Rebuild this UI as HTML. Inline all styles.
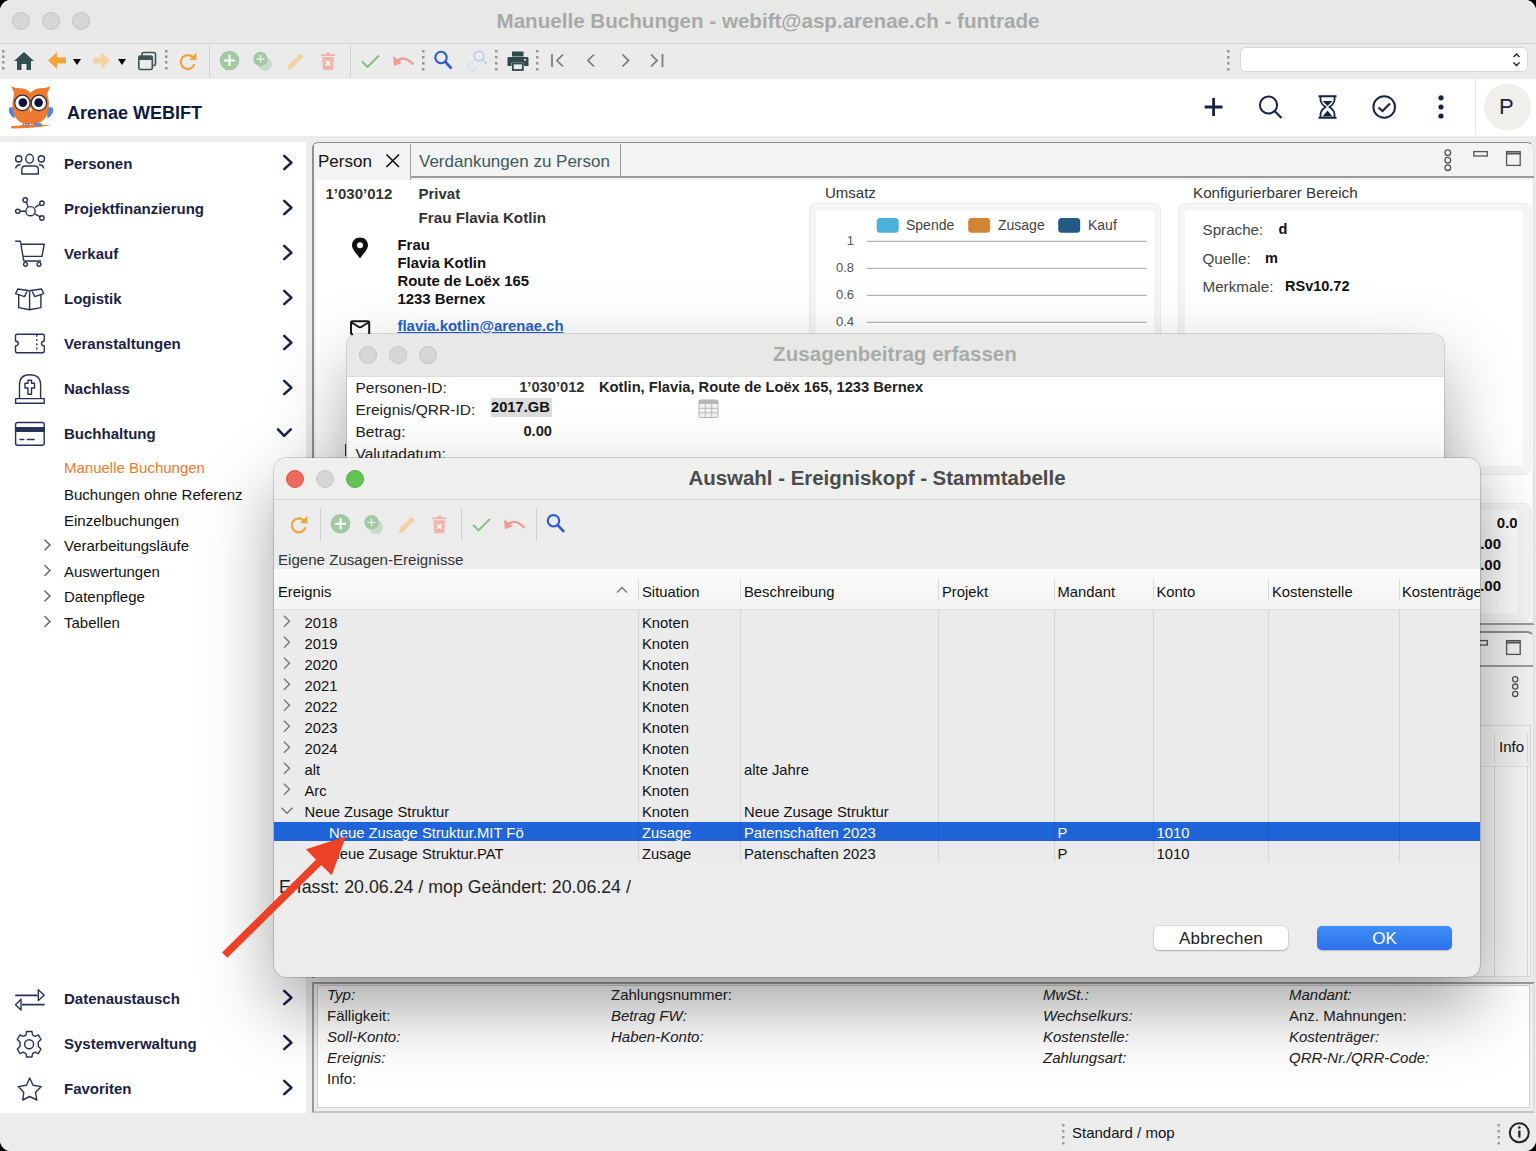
<!DOCTYPE html>
<html><head><meta charset="utf-8">
<style>
*{margin:0;padding:0;box-sizing:border-box}
html,body{width:1536px;height:1151px;overflow:hidden;background:#000}
body{font-family:"Liberation Sans",sans-serif;position:relative}
.a{position:absolute}
.t{position:absolute;white-space:nowrap;line-height:1}
#win{position:absolute;left:0;top:0;width:1536px;height:1151px;background:#ececec;border-radius:11px;overflow:hidden}
#titlebar{left:0;top:0;width:1536px;height:44px;background:#e8e9e7;border-bottom:1px solid #d2d3d1}
.tl{position:absolute;width:18px;height:18px;border-radius:50%;background:#d4d7d5;border:1px solid #c2c5c3}
#toolbar{left:0;top:44px;width:1536px;height:35px;background:#ebebeb}
#header{left:0;top:79px;width:1536px;height:57px;background:#fff}
#sidebar{left:0;top:142px;width:306px;height:971px;background:#fff}
.nav{font-size:15px;font-weight:bold;color:#1a2246}
.sub{font-size:15px;color:#111}
.chev{position:absolute}
.hdr{position:absolute;top:127px;font-size:14.8px;color:#111;white-space:nowrap;line-height:1}
.row{position:absolute;left:0;width:1206px;height:21px;font-size:14.8px;color:#111;line-height:1}
.row span{position:absolute;top:5.2px;white-space:nowrap}
.row .c0{left:30.5px}.row .c1{left:368px}.row .c2{left:470px}.row .c4{left:783.5px}.row .c5{left:882.5px}
.row.sel{color:#fff}
</style></head>
<body>
<div id="win">
  <div id="titlebar" class="a">
    <div class="tl" style="left:12px;top:12px"></div>
    <div class="tl" style="left:42px;top:12px"></div>
    <div class="tl" style="left:72px;top:12px"></div>
    <div class="t" style="left:0;width:1536px;text-align:center;top:10.8px;font-size:20.6px;font-weight:bold;color:#a7aaa8">Manuelle Buchungen - webift@asp.arenae.ch - funtrade</div>
  </div>
  <div id="toolbar" class="a">
    <svg class="a" style="left:0;top:0" width="1536" height="35" viewBox="0 44 1536 35">
      <!-- grip dots -->
      <g fill="#9a9585"><rect x="2" y="50" width="2.5" height="2.5"/><rect x="2" y="55.5" width="2.5" height="2.5"/><rect x="2" y="61" width="2.5" height="2.5"/><rect x="2" y="67" width="2.5" height="2.5"/></g>
      <g fill="#9a9585"><rect x="165" y="50" width="2.5" height="2.5"/><rect x="165" y="55.5" width="2.5" height="2.5"/><rect x="165" y="61" width="2.5" height="2.5"/><rect x="165" y="67" width="2.5" height="2.5"/></g>
      <g fill="#9a9585"><rect x="422" y="50" width="2.5" height="2.5"/><rect x="422" y="56" width="2.5" height="2.5"/><rect x="422" y="62" width="2.5" height="2.5"/><rect x="422" y="68" width="2.5" height="2.5"/></g>
      <g fill="#9a9585"><rect x="495" y="50" width="2.5" height="2.5"/><rect x="495" y="56" width="2.5" height="2.5"/><rect x="495" y="62" width="2.5" height="2.5"/><rect x="495" y="68" width="2.5" height="2.5"/></g>
      <g fill="#9a9585"><rect x="536" y="50" width="2.5" height="2.5"/><rect x="536" y="56" width="2.5" height="2.5"/><rect x="536" y="62" width="2.5" height="2.5"/><rect x="536" y="68" width="2.5" height="2.5"/></g>
      <g fill="#9a9585"><rect x="1227" y="50" width="2.5" height="2.5"/><rect x="1227" y="56" width="2.5" height="2.5"/><rect x="1227" y="62" width="2.5" height="2.5"/><rect x="1227" y="68" width="2.5" height="2.5"/></g>
      <!-- separators -->
      <rect x="209" y="46" width="1" height="31" fill="#d0d0d0"/>
      <rect x="350" y="46" width="1" height="31" fill="#d0d0d0"/>
      <!-- home -->
      <path d="M24 52 L34 61 L31 61 L31 70 L26.5 70 L26.5 64 L21.5 64 L21.5 70 L17 70 L17 61 L14 61 Z" fill="#2f4f50"/>
      <!-- back -->
      <path d="M48 60.5 L57 52 L57 57.5 L66 57.5 L66 63.5 L57 63.5 L57 69 Z" fill="#f0a53a"/>
      <path d="M73 59 L81 59 L77 65 Z" fill="#000"/>
      <!-- forward -->
      <path d="M110 60.5 L101 52 L101 57.5 L93 57.5 L93 63.5 L101 63.5 L101 69 Z" fill="#f3d3a3"/>
      <path d="M118 59 L126 59 L122 65 Z" fill="#000"/>
      <!-- windows -->
      <rect x="142" y="52.5" width="13.5" height="13" rx="1.5" fill="none" stroke="#3d5557" stroke-width="1.6"/>
      <rect x="138.8" y="56" width="13.5" height="13.5" rx="1.5" fill="#ebebeb" stroke="#3d5557" stroke-width="1.6"/>
      <rect x="138.8" y="56" width="13.5" height="4" fill="#3d5557"/>
      <!-- refresh -->
      <path d="M193.5 58 A7 7 0 1 0 194.5 64" fill="none" stroke="#f0a53a" stroke-width="2.2"/>
      <path d="M196.5 52.5 L196.5 60 L189 60 Z" fill="#f0a53a"/>
      <!-- plus circle -->
      <circle cx="229.5" cy="60.5" r="9.8" fill="#a3c9a2"/>
      <path d="M229.5 55 V66 M224 60.5 H235" stroke="#fff" stroke-width="2"/>
      <!-- plus 2 -->
      <circle cx="265" cy="64" r="7" fill="#c7dcc6"/>
      <circle cx="260.5" cy="59" r="7.2" fill="#a3c9a2"/>
      <path d="M260.5 55 V63 M256.5 59 H264.5" stroke="#e7f0e6" stroke-width="1.3"/>
      <!-- pencil -->
      <path d="M287 70 L288.5 65 L300 53.5 L303.5 57 L292 68.5 Z" fill="#f3d3a3"/>
      <!-- trash -->
      <path d="M321 54 H335 V56 H321 Z M326 52.5 H330 V54 H326 Z" fill="#f2b5ae"/>
      <path d="M322 57 H334 L333 70 H323 Z" fill="#f2b5ae"/>
      <path d="M325.8 61 L330.2 65.5 M330.2 61 L325.8 65.5" stroke="#fff" stroke-width="1.4"/>
      <!-- check -->
      <path d="M362 61.5 L367.5 67 L379 55.5" fill="none" stroke="#80bb80" stroke-width="1.9"/>
      <!-- undo -->
      <path d="M396.5 62 Q403 54 413.5 64.5" fill="none" stroke="#ef9b93" stroke-width="2.4"/>
      <path d="M393 56 L394 66 L402 63 Z" fill="#ef9b93"/>
      <!-- search -->
      <circle cx="441" cy="57.5" r="5.7" fill="none" stroke="#2c5ad6" stroke-width="2.1"/>
      <path d="M445 61.5 L451.5 68.5" stroke="#2c5ad6" stroke-width="2.6"/>
      <!-- search 2 -->
      <circle cx="479" cy="56" r="4.8" fill="none" stroke="#b7cdee" stroke-width="1.5"/>
      <path d="M482.5 59.5 L487 64.5" stroke="#b7cdee" stroke-width="1.6"/>
      <path d="M476 67 A4 4 0 1 1 473 63" fill="none" stroke="#cfe0f1" stroke-width="1.3"/>
      <!-- printer -->
      <rect x="512" y="51.5" width="11.5" height="5" fill="#2e4a4c"/>
      <path d="M508 57 H527.5 Q528.5 57 528.5 58.5 V66 H524 V62.5 H511.5 V66 H507.5 V58.5 Q507.5 57 508 57 Z" fill="#2e4a4c"/>
      <rect x="512.8" y="63.5" width="10" height="6.5" fill="none" stroke="#2e4a4c" stroke-width="1.8"/>
      <rect x="524" y="59" width="2" height="1.5" fill="#fff"/>
      <!-- nav -->
      <g fill="none" stroke="#777" stroke-width="1.7">
        <path d="M552 54 V67 M563 54.5 L557 60.5 L563 66.5"/>
        <path d="M594 54.5 L588 60.5 L594 66.5"/>
        <path d="M622.5 54.5 L628.5 60.5 L622.5 66.5"/>
        <path d="M651 54.5 L657 60.5 L651 66.5 M662.5 54 V67"/>
      </g>
      <!-- select box -->
      <rect x="1240.5" y="47.5" width="287" height="24" rx="5" fill="#fff" stroke="#d8d8d8"/>
      <path d="M1513.5 57 L1516.5 54 L1519.5 57 M1513.5 62.5 L1516.5 65.5 L1519.5 62.5" fill="none" stroke="#222" stroke-width="1.4"/>
    </svg>
  </div>
  <div id="header" class="a">
    <svg class="a" style="left:0;top:0" width="1536" height="56" viewBox="0 79 1536 56">
      <!-- owl -->
      <path d="M9.3 107.5 Q7 113.5 14.5 118.5 L15.5 107 Z" fill="#4a86e8"/>
      <path d="M52.8 107.5 Q55 113.5 47.5 118.5 L46.5 107 Z" fill="#4a86e8"/>
      <path d="M11 86.3 Q15 88.2 20 88.3 Q27 88.5 30.5 93 Q34 88.5 41 88.3 Q46 88.2 50.5 86.3 Q48.5 90 47.2 93.5 Q49.5 101 48.8 108 Q48 117 41 122 Q36 124.5 30.5 124.5 Q25 124.5 20 122 Q13 117 12.5 108 Q12 101 14.2 93.5 Q13 90 11 86.3 Z" fill="#ee7a30"/>
      <path d="M11 126.2 Q30 124.3 51 125 Q36 128.3 11.5 128.5 Z" fill="#ee7a30"/>
      <g fill="#4a86e8"><rect x="22.5" y="123.3" width="1.6" height="2.2"/><rect x="25" y="123.3" width="1.6" height="2.2"/><rect x="27.5" y="123.3" width="1.6" height="2.2"/><rect x="33.3" y="123.3" width="8.5" height="2.2" rx="1"/></g>
      <circle cx="22.4" cy="102.9" r="8.3" fill="#2a2a3a"/>
      <circle cx="38.9" cy="102.9" r="8.3" fill="#2a2a3a"/>
      <circle cx="22.4" cy="102.9" r="7.1" fill="#fdfbf5"/>
      <circle cx="38.9" cy="102.9" r="7.1" fill="#fdfbf5"/>
      <circle cx="22.9" cy="102.6" r="4.3" fill="#0b1640"/>
      <circle cx="38.6" cy="102.6" r="4.3" fill="#0b1640"/>
      <path d="M29.2 108.5 L32.2 108.5 L30.7 112.5 Z" fill="#fdfbf5"/>
      <!-- right icons -->
      <path d="M1213.6 98 V116 M1204.6 107 H1222.6" stroke="#1a2246" stroke-width="2.8"/>
      <circle cx="1268.5" cy="105" r="8.6" fill="none" stroke="#1a2246" stroke-width="2"/>
      <path d="M1274.8 111.3 L1281.5 118" stroke="#1a2246" stroke-width="2.2"/>
      <path d="M1318.5 96.3 H1336.5 M1318.5 117.8 H1336.5" stroke="#1a2246" stroke-width="2"/>
      <path d="M1320.5 96.5 V100 Q1321 104 1325.5 107 Q1321 110 1320.5 114 V117.5 M1334.5 96.5 V100 Q1334 104 1329.5 107 Q1334 110 1334.5 114 V117.5" fill="none" stroke="#1a2246" stroke-width="1.8"/>
      <path d="M1322.5 101 H1332.5 L1327.5 106 Z M1322.5 116.5 L1327.5 110.5 L1332.5 116.5 Z" fill="#1a2246"/>
      <circle cx="1384.2" cy="107" r="10.8" fill="none" stroke="#1a2246" stroke-width="2"/>
      <path d="M1378.5 107.5 L1382.5 111 L1390 103.5" fill="none" stroke="#1a2246" stroke-width="2.2"/>
      <circle cx="1441" cy="97.8" r="2.6" fill="#1a2246"/>
      <circle cx="1441" cy="107" r="2.6" fill="#1a2246"/>
      <circle cx="1441" cy="116" r="2.6" fill="#1a2246"/>
      <rect x="1475" y="79" width="1" height="56" fill="#e6e6e6"/>
      <circle cx="1507.6" cy="107" r="23.6" fill="#f0efec"/>
    </svg>
    <div class="t" style="left:67px;top:25px;font-size:18px;font-weight:bold;color:#0f1a3e">Arenae WEBIFT</div>
    <div class="t" style="left:1499px;top:17px;font-size:22px;color:#1a2246">P</div>
  </div>
  <div id="sidebar" class="a">
    <svg class="a" style="left:0;top:0" width="306" height="971" viewBox="0 142 306 971">
      <g fill="none" stroke="#1a2246" stroke-width="2.5" stroke-linecap="round" stroke-linejoin="round"><path d="M284.2 155.79999999999998 L291.4 162.7 L284.2 169.1"/><path d="M284.2 200.79999999999998 L291.4 207.7 L284.2 214.1"/><path d="M284.2 245.79999999999998 L291.4 252.7 L284.2 259.09999999999997"/><path d="M284.2 290.8 L291.4 297.7 L284.2 304.09999999999997"/><path d="M284.2 335.8 L291.4 342.7 L284.2 349.09999999999997"/><path d="M284.2 380.8 L291.4 387.7 L284.2 394.09999999999997"/><path d="M284.2 990.8000000000001 L291.4 997.7 L284.2 1004.1"/><path d="M284.2 1035.8 L291.4 1042.7 L284.2 1049.1000000000001"/><path d="M284.2 1080.8 L291.4 1087.7 L284.2 1094.1000000000001"/><path d="M278 429.3 L284.2 435.9 L290.8 429.3"/></g><g fill="none" stroke="#666" stroke-width="1.5"><path d="M44.5 539.7 L50 545.0 L44.5 550.3"/><path d="M44.5 565.2 L50 570.5 L44.5 575.8"/><path d="M44.5 590.7 L50 596.0 L44.5 601.3"/><path d="M44.5 616.2 L50 621.5 L44.5 626.8"/></g>
      <g fill="none" stroke="#283257" stroke-width="1.4" stroke-linejoin="round">
        <!-- personen (box 10,145) -->
        <g transform="translate(10 145)">
          <ellipse cx="19.6" cy="13.7" rx="3.8" ry="4.4"/>
          <circle cx="8.7" cy="13.9" r="3.1"/>
          <circle cx="31.4" cy="13.9" r="3.1"/>
          <path d="M11.8 29 V24.5 Q11.8 21 15.5 21 H24.5 Q28.3 21 28.3 24.5 V29 Z"/>
          <path d="M5.6 23.4 Q6.5 19.8 10.5 19.8 M33.8 23.4 Q32.9 19.8 29 19.8"/>
        </g>
        <!-- projekt (box 10,190) -->
        <g transform="translate(10 190)">
          <circle cx="20.5" cy="21.2" r="4.6"/>
          <circle cx="15.3" cy="10" r="2.2"/>
          <circle cx="31.9" cy="13.2" r="2.2"/>
          <circle cx="31.9" cy="28" r="2.2"/>
          <ellipse cx="7.8" cy="21.2" rx="2.2" ry="2"/>
          <path d="M16.5 12.2 L18 16.8 M29.8 14.3 L25 17.3 M29.9 26.7 L24.5 23.8 M10.2 21.2 L15.6 21.2"/>
        </g>
        <!-- cart (box 10,233) -->
        <g transform="translate(10 233)">
          <path d="M5.2 8.3 H10.4 L13.8 28 H31"/>
          <path d="M11.3 11.3 H34.2 L32 23.4 H13.2"/>
          <circle cx="15.5" cy="31.3" r="1.9"/>
          <circle cx="29" cy="31.3" r="1.9"/>
        </g>
        <!-- box (box 10,278) -->
        <g transform="translate(10 278)">
          <path d="M8.7 17 V29.6 L19.6 31.8 L30.9 29.6 V17"/>
          <path d="M19.6 13 V31.8"/>
          <path d="M19.6 12.8 L7.8 11 L5.6 15.6 L14.5 18.6 L17 13.5"/>
          <path d="M19.6 12.8 L31.5 11 L33.7 15.6 L24.8 18.6 L22.3 13.5"/>
        </g>
        <!-- ticket (box 10,323) -->
        <g transform="translate(10 323)">
          <path d="M7 11.3 H32.8 Q34.3 11.3 34.3 12.8 V18 Q31.5 18.5 31.5 20.5 Q31.5 22.5 34.3 23 V28.3 Q34.3 29.8 32.8 29.8 H7 Q5.5 29.8 5.5 28.3 V23 Q8.3 22.5 8.3 20.5 Q8.3 18.5 5.5 18 V12.8 Q5.5 11.3 7 11.3 Z"/>
          <path d="M26.8 12 V29" stroke-dasharray="1.8 2.4"/>
        </g>
        <!-- grave (box 10,368) -->
        <g transform="translate(10 368)">
          <path d="M9.5 30.2 V17 Q9.5 6.8 19.6 6.8 Q30.6 6.8 30.6 17 V30.2"/>
          <rect x="5.6" y="30.6" width="28.6" height="4.6"/>
          <path d="M18 26.2 V20 H15 V15.3 H18 V12.3 H21.5 V15.3 H24.5 V20 H21.5 V26.2 Z"/>
        </g>
        <!-- card (box 10,413) -->
        <g transform="translate(10 413)">
          <rect x="5.6" y="9.5" width="28.6" height="22.8" rx="2"/>
          <rect x="5.6" y="14.6" width="28.6" height="3.8" fill="#283257"/>
          <path d="M10 26.6 H13.8 M17.4 26.6 H24" stroke-width="1.5" stroke-linecap="round"/>
        </g>
        <!-- datenaustausch (box 10,978) -->
        <g transform="translate(10 978)">
          <path d="M5.2 17.3 H27.5 M12 26.7 H34.6" stroke-width="1.8"/>
          <path d="M28.3 11.8 L34.2 17.3 L28.3 22.5 Z"/>
          <path d="M11 21.2 L5.5 26.7 L11 32 Z"/>
        </g>
        <!-- gear (box 10,1023) -->
        <g transform="translate(10 1023)">
          <circle cx="19.1" cy="21.2" r="4.5"/>
          <path d="M16.5 8.5 H22 L22.5 12 L25 13.3 L28.3 11.8 L31 16.5 L28.3 19 V23.5 L31 26 L28.3 30.6 L25 29.2 L22.5 30.6 L22 34 H16.5 L16 30.6 L13.3 29.2 L10 30.6 L7.3 26 L10 23.5 V19 L7.3 16.5 L10 11.8 L13.3 13.3 L16 12 Z"/>
        </g>
        <!-- star (box 10,1068) -->
        <g transform="translate(10 1068)">
          <path d="M19.7 10 L23 17.3 L31.3 18.6 L25.5 24.5 L26.8 32 L19.7 28.5 L12.7 32 L13.8 24.5 L8.3 18.6 L16.5 17.3 Z"/>
        </g>
      </g>
    </svg>
    <div class="t nav" style="left:64px;top:14px">Personen</div>
    <div class="t nav" style="left:64px;top:59px">Projektfinanzierung</div>
    <div class="t nav" style="left:64px;top:104px">Verkauf</div>
    <div class="t nav" style="left:64px;top:149px">Logistik</div>
    <div class="t nav" style="left:64px;top:194px">Veranstaltungen</div>
    <div class="t nav" style="left:64px;top:239px">Nachlass</div>
    <div class="t nav" style="left:64px;top:284px">Buchhaltung</div>
    <div class="t sub" style="left:64px;top:318px;color:#ee7a30">Manuelle Buchungen</div>
    <div class="t sub" style="left:64px;top:345px">Buchungen ohne Referenz</div>
    <div class="t sub" style="left:64px;top:371px">Einzelbuchungen</div>
    <div class="t sub" style="left:64px;top:396px">Verarbeitungsläufe</div>
    <div class="t sub" style="left:64px;top:422px">Auswertungen</div>
    <div class="t sub" style="left:64px;top:447px">Datenpflege</div>
    <div class="t sub" style="left:64px;top:473px">Tabellen</div>
    <div class="t nav" style="left:64px;top:849px">Datenaustausch</div>
    <div class="t nav" style="left:64px;top:894px">Systemverwaltung</div>
    <div class="t nav" style="left:64px;top:939px">Favoriten</div>
  </div>

  <!-- main upper panel -->
  <div class="a" style="left:312px;top:142px;width:1223px;height:483px;border:2px solid #8f8f8f;border-top-width:1.5px;border-right-color:#e6e6e6;border-bottom-color:#9a9a9a;border-radius:6px 8px 0 0;background:#f3f3f3"></div>
  <div class="a" style="left:411px;top:176px;width:1123px;height:2px;background:#9b9b9b"></div>
  <div class="a" style="left:316px;top:180px;width:1216px;height:441px;background:#fff"></div>
  <!-- tabs -->
  <div class="a" style="left:314px;top:144px;width:97px;height:36px;background:#f3f3f3;border-right:1.5px solid #a5a5a5"></div>
  <div class="a" style="left:411px;top:144px;width:210px;height:32px;background:#f3f3f3;border-right:1.5px solid #999"></div>
  <div class="t" style="left:318px;top:152.8px;font-size:17px;color:#111">Person</div>
  <svg class="a" style="left:384px;top:152px" width="18" height="18" viewBox="0 0 18 18"><path d="M2.5 2.5 L15 15 M15 2.5 L2.5 15" stroke="#111" stroke-width="1.6"/></svg>
  <div class="t" style="left:419px;top:152.8px;font-size:17px;color:#3d5b5b">Verdankungen zu Person</div>
  <svg class="a" style="left:1436px;top:145px" width="95" height="30" viewBox="1436 145 95 30">
    <g fill="none" stroke="#555" stroke-width="1.3">
      <circle cx="1447.8" cy="152.7" r="2.8"/><circle cx="1447.8" cy="160.2" r="2.8"/><circle cx="1447.8" cy="167.7" r="2.8"/>
      <rect x="1473.8" y="151.6" width="13.5" height="4.4"/>
      <rect x="1506.6" y="151.6" width="13.6" height="13.8"/>
    </g>
    <rect x="1506" y="152.5" width="14.8" height="2" fill="#555"/>
  </svg>
  <!-- person details -->
  <div class="t" style="left:325.5px;top:186.3px;font-size:15px;font-weight:bold;color:#333">1’030’012</div>
  <div class="t" style="left:418.5px;top:186.3px;font-size:15px;font-weight:bold;color:#333">Privat</div>
  <div class="t" style="left:418.5px;top:210px;font-size:15.2px;font-weight:bold;color:#333">Frau Flavia Kotlin</div>
  <svg class="a" style="left:350px;top:236px" width="20" height="24" viewBox="0 0 20 24"><path d="M10 1.5 C5.3 1.5 2 5 2 9.2 C2 13.5 7 18 10 22.5 C13 18 18 13.5 18 9.2 C18 5 14.7 1.5 10 1.5 Z M10 6.3 A3 3 0 1 1 10 12.3 A3 3 0 1 1 10 6.3 Z" fill="#111" fill-rule="evenodd"/></svg>
  <div class="a" style="left:397.5px;top:235.5px;font-size:14.9px;font-weight:bold;color:#111;line-height:18px;white-space:nowrap">Frau<br>Flavia Kotlin<br>Route de Loëx 165<br>1233 Bernex</div>
  <svg class="a" style="left:348px;top:318px;z-index:5" width="25" height="18" viewBox="0 0 25 18"><path d="M3 16.5 V4.8 Q3 3.2 4.6 3.2 H19.6 Q21.2 3.2 21.2 4.8 V16" fill="none" stroke="#151515" stroke-width="2"/><path d="M3.3 16.3 H5" stroke="#151515" stroke-width="2"/><path d="M3.5 4.5 Q8 7 10 8.5 Q12 10 14 8.5 Q16 7 20.7 4.5" fill="none" stroke="#151515" stroke-width="1.9"/></svg>
  <div class="t" style="left:397.5px;top:318.5px;font-size:14.9px;font-weight:bold;color:#1f5fd0;text-decoration:underline">flavia.kotlin@arenae.ch</div>
  <!-- Umsatz -->
  <div class="t" style="left:825px;top:184.5px;font-size:15px;color:#333">Umsatz</div>
  <div class="a" style="left:808.5px;top:202.5px;width:352px;height:300px;background:#f5f5f5;border:1px solid #ebebeb;border-radius:7px"></div>
  <div class="a" style="left:816px;top:211px;width:338px;height:280px;background:#fff"></div>
  <svg class="a" style="left:816px;top:211px" width="338" height="130" viewBox="816 211 338 130">
    <rect x="876.7" y="218" width="22" height="14.7" rx="3.5" fill="#4bb0da"/>
    <rect x="968.2" y="218" width="22" height="14.7" rx="3.5" fill="#d18532"/>
    <rect x="1058.2" y="218" width="22" height="14.7" rx="3.5" fill="#225a83"/>
    <g stroke="#b5b5b5" stroke-width="1.2"><path d="M866.8 241.3 H1146.6 M866.8 268.3 H1146.6 M866.8 295.3 H1146.6 M866.8 322.3 H1146.6"/></g>
  </svg>
  <div class="t" style="left:906px;top:218px;font-size:14px;color:#444">Spende</div>
  <div class="t" style="left:998px;top:218px;font-size:14px;color:#444">Zusage</div>
  <div class="t" style="left:1088px;top:218px;font-size:14px;color:#444">Kauf</div>
  <div class="t" style="left:820px;width:34px;text-align:right;top:234px;font-size:13px;color:#555">1</div>
  <div class="t" style="left:820px;width:34px;text-align:right;top:261px;font-size:13px;color:#555">0.8</div>
  <div class="t" style="left:820px;width:34px;text-align:right;top:288px;font-size:13px;color:#555">0.6</div>
  <div class="t" style="left:820px;width:34px;text-align:right;top:315px;font-size:13px;color:#555">0.4</div>
  <!-- Konfigurierbarer -->
  <div class="t" style="left:1193px;top:184.5px;font-size:15.2px;color:#333">Konfigurierbarer Bereich</div>
  <div class="a" style="left:1178px;top:202.5px;width:353px;height:272px;background:#f5f5f5;border:1px solid #ebebeb;border-radius:7px"></div>
  <div class="a" style="left:1185px;top:211px;width:338px;height:255px;background:#fff"></div>
  <div class="t" style="left:1202.5px;top:222px;font-size:15.2px;color:#444">Sprache:</div>
  <div class="t" style="left:1278.5px;top:222px;font-size:14.5px;font-weight:bold;color:#111">d</div>
  <div class="t" style="left:1202.5px;top:250.5px;font-size:15.2px;color:#444">Quelle:</div>
  <div class="t" style="left:1265px;top:250.5px;font-size:14.5px;font-weight:bold;color:#111">m</div>
  <div class="t" style="left:1202.5px;top:279px;font-size:15.2px;color:#444">Merkmale:</div>
  <div class="t" style="left:1285px;top:279px;font-size:14.5px;font-weight:bold;color:#111">RSv10.72</div>
  <!-- totals box -->
  <div class="a" style="left:1178px;top:502.5px;width:353px;height:118px;background:#f5f5f5;border:1px solid #ebebeb;border-radius:7px"></div>
  <div class="a" style="left:1185px;top:510px;width:332px;height:103px;background:#fff;overflow:hidden">
    <div class="t" style="left:0;width:341px;text-align:right;top:5px;font-size:15px;font-weight:bold;color:#111">0.00</div>
    <div class="t" style="left:0;width:316px;text-align:right;top:26px;font-size:15px;font-weight:bold;color:#111">0.00</div>
    <div class="t" style="left:0;width:316px;text-align:right;top:47px;font-size:15px;font-weight:bold;color:#111">0.00</div>
    <div class="t" style="left:0;width:316px;text-align:right;top:68px;font-size:15px;font-weight:bold;color:#111">0.00</div>
  </div>
  <!-- second panel -->
  <div class="a" style="left:312px;top:631px;width:1223px;height:347px;border:2px solid #8f8f8f;border-right-color:#e6e6e6;border-bottom:none;border-radius:6px 8px 0 0;background:#f3f3f3"></div>
  <div class="a" style="left:314px;top:665px;width:1219px;height:2px;background:#9b9b9b"></div>
  <svg class="a" style="left:1436px;top:633px" width="95" height="70" viewBox="1436 633 95 70">
    <g fill="none" stroke="#555" stroke-width="1.3">
      <rect x="1473.8" y="640.6" width="13.5" height="4.4"/>
      <rect x="1506.6" y="640.6" width="13.6" height="13.8"/>
      <circle cx="1515.2" cy="679.3" r="2.6"/><circle cx="1515.2" cy="686.6" r="2.6"/><circle cx="1515.2" cy="693.9" r="2.6"/>
    </g>
    <rect x="1506" y="641.5" width="14.8" height="2" fill="#555"/>
  </svg>
  <div class="a" style="left:1200px;top:724.5px;width:331px;height:252px;background:#f4f4f4;border:1px solid #dadada"></div>
  <div class="a" style="left:1201px;top:766px;width:329px;height:210px;background:#f7f7f7;border-top:1px solid #e2e2e2"></div>
  <div class="a" style="left:1494px;top:734px;width:1px;height:29px;background:#dcdcdc"></div>
  <div class="a" style="left:1527px;top:734px;width:1px;height:29px;background:#dcdcdc"></div>
  <div class="a" style="left:1494px;top:767px;width:1px;height:209px;background:#dadada"></div>
  <div class="a" style="left:1527px;top:767px;width:1px;height:209px;background:#dadada"></div>
  <div class="t" style="left:1499px;top:739px;font-size:15px;color:#111">Info</div>
  <!-- bottom detail panel -->
  <div class="a" style="left:312px;top:982px;width:1223px;height:131px;border:2px solid #9b9b9b;border-right-color:#e0e0e0;border-bottom-color:#c4c4c4;background:#eee"></div>
  <div class="a" style="left:317px;top:985px;width:1213px;height:123px;background:#fff;border:1px solid #d0d0d0"></div>
  <div class="a" style="left:327px;top:983.8px;font-size:15px;color:#222;line-height:21px;white-space:nowrap"><i>Typ:</i><br>Fälligkeit:<br><i>Soll-Konto:</i><br><i>Ereignis:</i><br>Info:</div>
  <div class="a" style="left:611px;top:983.8px;font-size:15px;color:#222;line-height:21px;white-space:nowrap">Zahlungsnummer:<br><i>Betrag FW:</i><br><i>Haben-Konto:</i></div>
  <div class="a" style="left:1043px;top:983.8px;font-size:15px;color:#222;line-height:21px;white-space:nowrap"><i>MwSt.:</i><br><i>Wechselkurs:</i><br><i>Kostenstelle:</i><br><i>Zahlungsart:</i></div>
  <div class="a" style="left:1289px;top:983.8px;font-size:15px;color:#222;line-height:21px;white-space:nowrap"><i>Mandant:</i><br>Anz. Mahnungen:<br><i>Kostenträger:</i><br><i>QRR-Nr./QRR-Code:</i></div>

  <div class="a" style="left:344.5px;top:444px;width:1.6px;height:12px;background:#333"></div>
  <!-- dialog 1 -->
  <div class="a" style="left:346.5px;top:334px;width:1097px;height:200px;border-radius:10px 10px 0 0;background:#fff;box-shadow:0 0 0 0.5px rgba(0,0,0,0.25),0 30px 70px rgba(0,0,0,0.34);overflow:hidden">
    <div class="a" style="left:0;top:0;width:1097px;height:42.5px;background:#e8e9e7;border-bottom:1px solid #dcdcdc"></div>
    <div class="tl" style="left:12px;top:11.5px"></div>
    <div class="tl" style="left:42px;top:11.5px"></div>
    <div class="tl" style="left:72px;top:11.5px"></div>
    <div class="t" style="left:0;width:1097px;text-align:center;top:9.8px;font-size:20.6px;font-weight:bold;color:#a9aba9">Zusagenbeitrag erfassen</div>
    <div class="t" style="left:9px;top:45.5px;font-size:15.5px;color:#222">Personen-ID:</div>
    <div class="t" style="left:9px;top:67.5px;font-size:15.5px;color:#222">Ereignis/QRR-ID:</div>
    <div class="t" style="left:9px;top:90px;font-size:15.5px;color:#222">Betrag:</div>
    <div class="t" style="left:9px;top:112px;font-size:15.5px;color:#222">Valutadatum:</div>
    <div class="t" style="left:100px;width:138px;text-align:right;top:45.5px;font-size:14.7px;font-weight:bold;color:#333">1’030’012</div>
    <div class="t" style="left:252.5px;top:45.5px;font-size:14.7px;font-weight:bold;color:#222">Kotlin, Flavia, Route de Loëx 165, 1233 Bernex</div>
    <div class="a" style="left:144px;top:64.3px;width:61px;height:19.2px;background:#dcdcdc"></div>
    <div class="t" style="left:144.5px;top:66px;font-size:14.7px;font-weight:bold;color:#111">2017.GB</div>
    <div class="t" style="left:100px;width:105.5px;text-align:right;top:90px;font-size:14.7px;font-weight:bold;color:#222">0.00</div>
    <svg class="a" style="left:351px;top:64.5px" width="22" height="20" viewBox="0 0 22 20">
      <rect x="1" y="1" width="19" height="17.5" rx="1.5" fill="#f2f2f2" stroke="#b0b0b0" stroke-width="1"/>
      <rect x="1" y="1" width="19" height="4" fill="#b8b8b8"/>
      <g stroke="#b8b8b8" stroke-width="1"><path d="M1 9.3 H20 M1 13.8 H20 M7.3 5 V18.5 M13.7 5 V18.5"/></g>
    </svg>
  </div>
  <!-- dialog 2 -->
  <div class="a" style="left:274px;top:457.7px;width:1205.5px;height:519px;border-radius:12px;background:#ececec;box-shadow:0 0 0 0.5px rgba(0,0,0,0.3),0 30px 70px rgba(0,0,0,0.36);overflow:hidden">
    <div class="a" style="left:0;top:0;width:1206px;height:42.5px;background:#eff0ee;border-bottom:1px solid #d6d6d6"></div>
    <div class="tl" style="left:12.4px;top:12.4px;background:#ee6a5f;border-color:#d8574d"></div>
    <div class="tl" style="left:42.3px;top:12.4px"></div>
    <div class="tl" style="left:72.4px;top:12.4px;background:#5fc454;border-color:#51ad47"></div>
    <div class="t" style="left:0;width:1206px;text-align:center;top:10.3px;font-size:20.45px;font-weight:bold;color:#4a4b4a">Auswahl - Ereigniskopf - Stammtabelle</div>

    <svg class="a" style="left:0;top:0" width="1206" height="519" viewBox="274 457.7 1206 519">
      <g transform="translate(111 463)">
      <path d="M193.5 58 A7 7 0 1 0 194.5 64" fill="none" stroke="#f0a53a" stroke-width="2.2"/>
      <path d="M196.5 52.5 L196.5 60 L189 60 Z" fill="#f0a53a"/>
      </g>
      <rect x="320" y="508" width="1" height="33" fill="#cfcfcf"/>
      <g transform="translate(111 463)">
      <circle cx="229.5" cy="60.5" r="9.8" fill="#a3c9a2"/>
      <path d="M229.5 55 V66 M224 60.5 H235" stroke="#fff" stroke-width="2"/>
      </g><g transform="translate(111 463)">
      <circle cx="265" cy="64" r="7" fill="#c7dcc6"/>
      <circle cx="260.5" cy="59" r="7.2" fill="#a3c9a2"/>
      <path d="M260.5 55 V63 M256.5 59 H264.5" stroke="#e7f0e6" stroke-width="1.3"/>
      </g><g transform="translate(111.4 463)">
      <path d="M287 70 L288.5 65 L300 53.5 L303.5 57 L292 68.5 Z" fill="#f3d3a3"/>
      </g><g transform="translate(111.4 463)">
      <path d="M321 54 H335 V56 H321 Z M326 52.5 H330 V54 H326 Z" fill="#f2b5ae"/>
      <path d="M322 57 H334 L333 70 H323 Z" fill="#f2b5ae"/>
      <path d="M325.8 61 L330.2 65.5 M330.2 61 L325.8 65.5" stroke="#fff" stroke-width="1.4"/>
      </g>
      <rect x="461" y="508" width="1" height="33" fill="#cfcfcf"/>
      <g transform="translate(111 463)">
      <path d="M362 61.5 L367.5 67 L379 55.5" fill="none" stroke="#80bb80" stroke-width="1.9"/>
      </g><g transform="translate(111 463)">
      <path d="M396.5 62 Q403 54 413.5 64.5" fill="none" stroke="#ef9b93" stroke-width="2.4"/>
      <path d="M393 56 L394 66 L402 63 Z" fill="#ef9b93"/>
      </g>
      <rect x="536" y="508" width="1" height="33" fill="#cfcfcf"/>
      <g transform="translate(112.5 463)">
      <circle cx="441" cy="57.5" r="5.7" fill="none" stroke="#2c5ad6" stroke-width="2.1"/>
      <path d="M445 61.5 L451.5 68.5" stroke="#2c5ad6" stroke-width="2.6"/>
      </g>
    </svg>
    <div class="t" style="left:4px;top:94px;font-size:15.1px;color:#333">Eigene Zusagen-Ereignisse</div>
    <!-- table header -->
    <div class="a" style="left:0;top:111.5px;width:1206px;height:40.5px;background:linear-gradient(#fbfbfb,#f4f4f4);border-bottom:1px solid #dedede"></div>
    <div class="a" style="left:0;top:152.5px;width:1206px;height:252px;background:#ebebeb"></div>
    <div class="a" style="left:364px;top:121px;width:1px;height:22px;background:#dadada"></div>
    <div class="a" style="left:466px;top:121px;width:1px;height:22px;background:#dadada"></div>
    <div class="a" style="left:664px;top:121px;width:1px;height:22px;background:#dadada"></div>
    <div class="a" style="left:779.5px;top:121px;width:1px;height:22px;background:#dadada"></div>
    <div class="a" style="left:878.5px;top:121px;width:1px;height:22px;background:#dadada"></div>
    <div class="a" style="left:994px;top:121px;width:1px;height:22px;background:#dadada"></div>
    <div class="a" style="left:1124.5px;top:121px;width:1px;height:22px;background:#dadada"></div>
    <div class="a" style="left:364px;top:152.5px;width:1px;height:252px;background:#d6d6d6"></div>
    <div class="a" style="left:466px;top:152.5px;width:1px;height:252px;background:#d6d6d6"></div>
    <div class="a" style="left:664px;top:152.5px;width:1px;height:252px;background:#d6d6d6"></div>
    <div class="a" style="left:779.5px;top:152.5px;width:1px;height:252px;background:#d6d6d6"></div>
    <div class="a" style="left:878.5px;top:152.5px;width:1px;height:252px;background:#d6d6d6"></div>
    <div class="a" style="left:994px;top:152.5px;width:1px;height:252px;background:#d6d6d6"></div>
    <div class="a" style="left:1124.5px;top:152.5px;width:1px;height:252px;background:#d6d6d6"></div>
    <div class="hdr" style="left:4px">Ereignis</div>
    <div class="hdr" style="left:368px">Situation</div>
    <div class="hdr" style="left:470px">Beschreibung</div>
    <div class="hdr" style="left:668px">Projekt</div>
    <div class="hdr" style="left:783.5px">Mandant</div>
    <div class="hdr" style="left:882.5px">Konto</div>
    <div class="hdr" style="left:998px">Kostenstelle</div>
    <div class="hdr" style="left:1128px">Kostenträger</div>
    <svg class="a" style="left:340px;top:127px" width="16" height="10" viewBox="0 0 16 10"><path d="M3 7.5 L8 2.5 L13 7.5" fill="none" stroke="#777" stroke-width="1.3"/></svg>
    <div class="a" style="left:0;top:364.1px;width:1206px;height:19px;background:#1f65d9"></div><div class="a" style="left:364px;top:364.1px;width:1px;height:19px;background:rgba(0,0,0,0.1)"></div><div class="a" style="left:466px;top:364.1px;width:1px;height:19px;background:rgba(0,0,0,0.1)"></div><div class="a" style="left:664px;top:364.1px;width:1px;height:19px;background:rgba(0,0,0,0.1)"></div><div class="a" style="left:779.5px;top:364.1px;width:1px;height:19px;background:rgba(0,0,0,0.1)"></div><div class="a" style="left:878.5px;top:364.1px;width:1px;height:19px;background:rgba(0,0,0,0.1)"></div><div class="a" style="left:994px;top:364.1px;width:1px;height:19px;background:rgba(0,0,0,0.1)"></div><div class="a" style="left:1124.5px;top:364.1px;width:1px;height:19px;background:rgba(0,0,0,0.1)"></div>
    <div class="row" style="top:153.3px"><span class="c0">2018</span><span class="c1">Knoten</span><span class="c2"></span></div>
<div class="row" style="top:174.3px"><span class="c0">2019</span><span class="c1">Knoten</span><span class="c2"></span></div>
<div class="row" style="top:195.3px"><span class="c0">2020</span><span class="c1">Knoten</span><span class="c2"></span></div>
<div class="row" style="top:216.3px"><span class="c0">2021</span><span class="c1">Knoten</span><span class="c2"></span></div>
<div class="row" style="top:237.3px"><span class="c0">2022</span><span class="c1">Knoten</span><span class="c2"></span></div>
<div class="row" style="top:258.3px"><span class="c0">2023</span><span class="c1">Knoten</span><span class="c2"></span></div>
<div class="row" style="top:279.3px"><span class="c0">2024</span><span class="c1">Knoten</span><span class="c2"></span></div>
<div class="row" style="top:300.3px"><span class="c0">alt</span><span class="c1">Knoten</span><span class="c2">alte Jahre</span></div>
<div class="row" style="top:321.3px"><span class="c0">Arc</span><span class="c1">Knoten</span><span class="c2"></span></div>
<div class="row" style="top:342.3px"><span class="c0">Neue Zusage Struktur</span><span class="c1">Knoten</span><span class="c2">Neue Zusage Struktur</span></div>
<div class="row sel" style="top:363.3px"><span class="c0" style="left:55px">Neue Zusage Struktur.MIT Fö</span><span class="c1">Zusage</span><span class="c2">Patenschaften 2023</span><span class="c4">P</span><span class="c5">1010</span></div>
<div class="row" style="top:384.3px"><span class="c0" style="left:55px">Neue Zusage Struktur.PAT</span><span class="c1">Zusage</span><span class="c2">Patenschaften 2023</span><span class="c4">P</span><span class="c5">1010</span></div>

    <svg class="a" style="left:0;top:0" width="40" height="420"><g fill="none" stroke="#777" stroke-width="1.4"><path d="M10 157.8 L15.5 163.3 L10 168.8"/><path d="M10 178.8 L15.5 184.3 L10 189.8"/><path d="M10 199.8 L15.5 205.3 L10 210.8"/><path d="M10 220.8 L15.5 226.3 L10 231.8"/><path d="M10 241.8 L15.5 247.3 L10 252.8"/><path d="M10 262.8 L15.5 268.3 L10 273.8"/><path d="M10 283.8 L15.5 289.3 L10 294.8"/><path d="M10 304.8 L15.5 310.3 L10 315.8"/><path d="M10 325.8 L15.5 331.3 L10 336.8"/><path d="M7.5 349.8 L13 355.3 L18.5 349.8"/></g></svg>
    <div class="t" style="left:5px;top:421px;font-size:17.8px;color:#222">Erfasst: 20.06.24 / mop Geändert: 20.06.24 /</div>
    <div class="a" style="left:880px;top:468.4px;width:134px;height:24px;background:#fff;border-radius:5px;box-shadow:0 0 0 0.5px rgba(0,0,0,0.15),0 1px 1.5px rgba(0,0,0,0.2)"></div>
    <div class="t" style="left:880px;width:134px;text-align:center;top:472px;font-size:17px;color:#222;letter-spacing:0.2px">Abbrechen</div>
    <div class="a" style="left:1043.2px;top:468.4px;width:134.7px;height:24px;background:linear-gradient(#3f8ef6,#2b72ea);border-radius:5px;box-shadow:0 0.5px 1px rgba(0,0,0,0.2)"></div>
    <div class="t" style="left:1043.2px;width:134.7px;text-align:center;top:472px;font-size:17px;color:#fff">OK</div>
  </div>
  <!-- status bar -->
  <div class="a" style="left:0;top:1113px;width:1536px;height:38px;background:#ececec"></div>
  <svg class="a" style="left:1055px;top:1118px" width="481" height="33" viewBox="1055 1118 481 33">
    <g fill="#a39f8c"><rect x="1062" y="1124" width="2.5" height="2.5"/><rect x="1062" y="1130" width="2.5" height="2.5"/><rect x="1062" y="1136" width="2.5" height="2.5"/><rect x="1062" y="1142" width="2.5" height="2.5"/>
    <rect x="1497.5" y="1124" width="2.5" height="2.5"/><rect x="1497.5" y="1130" width="2.5" height="2.5"/><rect x="1497.5" y="1136" width="2.5" height="2.5"/><rect x="1497.5" y="1142" width="2.5" height="2.5"/></g>
    <circle cx="1519.3" cy="1132.8" r="9.5" fill="none" stroke="#222" stroke-width="2"/>
    <rect x="1518.2" y="1130.5" width="2.3" height="7" fill="#222"/>
    <circle cx="1519.3" cy="1127.5" r="1.3" fill="#222"/>
  </svg>
  <div class="t" style="left:1072px;top:1125px;font-size:15px;color:#111">Standard / mop</div>
  <svg class="a" style="left:0;top:0" width="1536" height="1151"><path d="M222 952.6 L316 859.7 L305.9 849.2 L345.8 836.5 L331.7 875.3 L321.3 865.1 L227.3 957.7 Z" fill="#ec4125"/></svg>
</div>
</body></html>
